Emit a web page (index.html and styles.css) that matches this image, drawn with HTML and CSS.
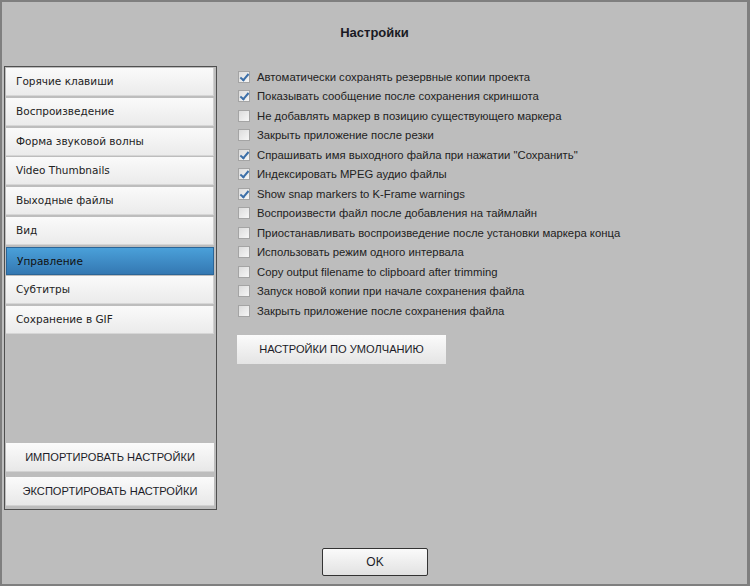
FILE: index.html
```
<!DOCTYPE html>
<html>
  <head>
    <meta charset="utf-8" />
    <title>Настройки</title>
    <link rel="stylesheet" href="styles.css">
  </head>
  <body>
    <div class="window">
      <h1 class="title">Настройки</h1>

      <div class="main">
        <div class="sidebar">
          <div class="tabs">
            <div class="tab">Горячие клавиши</div>
            <div class="tab">Воспроизведение</div>
            <div class="tab">Форма звуковой волны</div>
            <div class="tab">Video Thumbnails</div>
            <div class="tab">Выходные файлы</div>
            <div class="tab">Вид</div>
            <div class="tab active">Управление</div>
            <div class="tab">Субтитры</div>
            <div class="tab">Сохранение в GIF</div>
          </div>
          <button class="side-btn">ИМПОРТИРОВАТЬ НАСТРОЙКИ</button>
          <button class="side-btn">ЭКСПОРТИРОВАТЬ НАСТРОЙКИ</button>
        </div>

        <div class="content">
          <label class="opt"><span class="box checked"></span>Автоматически сохранять резервные копии проекта</label>
          <label class="opt"><span class="box checked"></span>Показывать сообщение после сохранения скриншота</label>
          <label class="opt"><span class="box"></span>Не добавлять маркер в позицию существующего маркера</label>
          <label class="opt"><span class="box"></span>Закрыть приложение после резки</label>
          <label class="opt"><span class="box checked"></span>Спрашивать имя выходного файла при нажатии "Сохранить"</label>
          <label class="opt"><span class="box checked"></span>Индексировать MPEG аудио файлы</label>
          <label class="opt"><span class="box checked"></span>Show snap markers to K-Frame warnings</label>
          <label class="opt"><span class="box"></span>Воспроизвести файл после добавления на таймлайн</label>
          <label class="opt"><span class="box"></span>Приостанавливать воспроизведение после установки маркера конца</label>
          <label class="opt"><span class="box"></span>Использовать режим одного интервала</label>
          <label class="opt"><span class="box"></span>Copy output filename to clipboard after trimming</label>
          <label class="opt"><span class="box"></span>Запуск новой копии при начале сохранения файла</label>
          <label class="opt"><span class="box"></span>Закрыть приложение после сохранения файла</label>

          <button class="default-btn">НАСТРОЙКИ ПО УМОЛЧАНИЮ</button>
        </div>
      </div>

      <div class="footer">
        <button class="ok-btn">OK</button>
      </div>
    </div>
  </body>
</html>
```

FILE: styles.css
```
body {
  margin: 0;
  background: #bdbdbd;
  font-family: "Liberation Sans", Arial, sans-serif;
}

.window {
  width: 750px;
  height: 586px;
  box-sizing: border-box;
  border: 2px solid #7f7f7f;
  border-right-width: 3px;
  background: #bdbdbd;
  display: flex;
  flex-direction: column;
}

.title {
  margin: 0;
  height: 64px;
  line-height: 62px;
  text-align: center;
  font-size: 13px;
  font-weight: bold;
  color: #1a1a24;
}

.main {
  display: flex;
  padding-left: 2px;
}

/* left list */
.sidebar {
  width: 213px;
  height: 444px;
  box-sizing: border-box;
  border: 1px solid #4f4f4f;
  padding: 1px 2px 3px 1px;
  display: flex;
  flex-direction: column;
}

.tabs {
  flex: 1;
}

.tab {
  height: 27px;
  line-height: 27px;
  margin-bottom: 1.75px;
  padding-left: 10px;
  font-family: "DejaVu Sans", Tahoma, sans-serif;
  font-size: 10.5px;
  color: #222;
  background: linear-gradient(#fafafa, #ebebeb);
  border-bottom: 1px solid #d6d6d6;
  border-right: 1px solid #d0d0d0;
}

.tab.active {
  background: linear-gradient(#4aa0d9, #3478b2);
  border: 1px solid #2b6597;
  line-height: 26px;
  height: 26px;
  color: #111;
}

.side-btn {
  height: 29px;
  margin-top: 5px;
  border: none;
  border-bottom: 1px solid #d2d2d2;
  background: linear-gradient(#fbfbfb, #e8e8e8);
  font-family: "Liberation Sans", Arial, sans-serif;
  font-size: 11.1px;
  color: #1c1c28;
  padding: 0;
}

/* options */
.content {
  margin-left: 20px;
  padding-top: 1px;
}

.opt {
  display: flex;
  align-items: center;
  height: 19.5px;
  font-size: 11.3px;
  color: #222;
}

.box {
  width: 10px;
  height: 10px;
  margin-left: 1px;
  margin-right: 7px;
  border: 1px solid #a4a4a4;
  background: linear-gradient(135deg, #dcdcdc, #f6f6f6);
  position: relative;
}

.box.checked::after {
  content: "";
  position: absolute;
  left: 3px;
  top: 0px;
  width: 3px;
  height: 7px;
  border: solid #3c6fa8;
  border-width: 0 2px 2px 0;
  transform: rotate(40deg);
}

.default-btn {
  display: block;
  margin-top: 14px;
  width: 209px;
  height: 29px;
  border: none;
  background: linear-gradient(#fbfbfb, #e4e4e4);
  font-family: "Liberation Sans", Arial, sans-serif;
  font-size: 11.1px;
  color: #1c1c28;
  padding: 0;
}

.footer {
  margin-top: 38px;
  padding-left: 320px;
}

.ok-btn {
  width: 106px;
  height: 28px;
  border: 1px solid #333;
  border-radius: 2px;
  background: linear-gradient(#fafafa, #e2e2e2);
  font-family: "Liberation Sans", Arial, sans-serif;
  font-size: 12px;
  color: #1c1c28;
  padding: 0;
}
```
